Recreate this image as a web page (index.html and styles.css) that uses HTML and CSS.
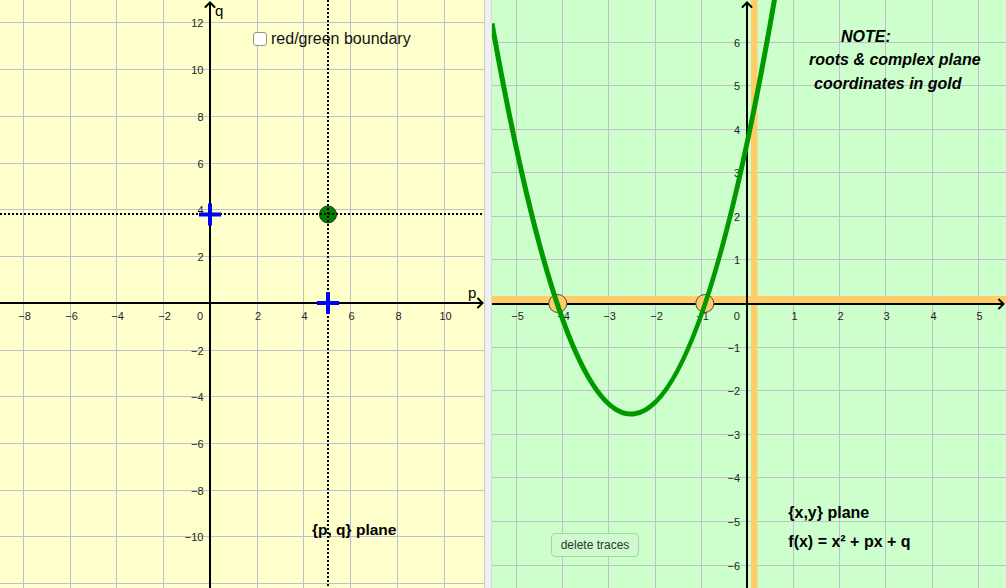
FILE: index.html
```html
<!DOCTYPE html>
<html lang="en">
<head>
<meta charset="utf-8">
<title>Quadratic roots: {p, q} plane and {x, y} plane</title>
<link rel="stylesheet" href="styles.css">
</head>
<body>
<div class="applet">
  <section class="view view-pq">
    <svg class="canvas" width="484" height="588" viewBox="0 0 484 588">
      <g class="grid grid-pq">
        <line x1="23.5" y1="0" x2="23.5" y2="588"/>
        <line x1="70.5" y1="0" x2="70.5" y2="588"/>
        <line x1="116.5" y1="0" x2="116.5" y2="588"/>
        <line x1="163.5" y1="0" x2="163.5" y2="588"/>
        <line x1="257.5" y1="0" x2="257.5" y2="588"/>
        <line x1="303.5" y1="0" x2="303.5" y2="588"/>
        <line x1="350.5" y1="0" x2="350.5" y2="588"/>
        <line x1="397.5" y1="0" x2="397.5" y2="588"/>
        <line x1="444.5" y1="0" x2="444.5" y2="588"/>
        <line x1="0" y1="22.5" x2="484" y2="22.5"/>
        <line x1="0" y1="69.5" x2="484" y2="69.5"/>
        <line x1="0" y1="116.5" x2="484" y2="116.5"/>
        <line x1="0" y1="163.5" x2="484" y2="163.5"/>
        <line x1="0" y1="209.5" x2="484" y2="209.5"/>
        <line x1="0" y1="256.5" x2="484" y2="256.5"/>
        <line x1="0" y1="350.5" x2="484" y2="350.5"/>
        <line x1="0" y1="396.5" x2="484" y2="396.5"/>
        <line x1="0" y1="443.5" x2="484" y2="443.5"/>
        <line x1="0" y1="490.5" x2="484" y2="490.5"/>
        <line x1="0" y1="536.5" x2="484" y2="536.5"/>
        <line x1="0" y1="583.5" x2="484" y2="583.5"/>
      </g>
      <g class="axes">
        <line x1="210" y1="2" x2="210" y2="588"/>
        <line x1="0" y1="303" x2="483" y2="303"/>
        <polyline class="arrow" points="205.5,7 210,2.5 214.5,7"/>
        <polyline class="arrow" points="478,298.5 482.5,303 478,307.5"/>
      </g>
      <text class="axis-name" x="215" y="16">q</text>
      <text class="axis-name" x="468" y="297.5">p</text>
      <g class="tick tick-x">
        <text x="24.5" y="319.5">−8</text>
        <text x="71.5" y="319.5">−6</text>
        <text x="117.5" y="319.5">−4</text>
        <text x="164.5" y="319.5">−2</text>
        <text x="200" y="319.5">0</text>
        <text x="258" y="319.5">2</text>
        <text x="304.5" y="319.5">4</text>
        <text x="351.5" y="319.5">6</text>
        <text x="398.5" y="319.5">8</text>
        <text x="445.5" y="319.5">10</text>
      </g>
      <g class="tick tick-y">
        <text x="203.5" y="27">12</text>
        <text x="203.5" y="74">10</text>
        <text x="203.5" y="121">8</text>
        <text x="203.5" y="168">6</text>
        <text x="203.5" y="214">4</text>
        <text x="203.5" y="261">2</text>
        <text x="203.5" y="355">−2</text>
        <text x="203.5" y="401">−4</text>
        <text x="203.5" y="448">−6</text>
        <text x="203.5" y="495">−8</text>
        <text x="203.5" y="541">−10</text>
      </g>
      <circle class="pq-point" cx="328" cy="214.5" r="8.5"/>
      <g class="dotted">
        <line x1="328" y1="0" x2="328" y2="588"/>
        <line x1="0" y1="214" x2="484" y2="214"/>
      </g>
      <g class="cross">
        <line x1="199" y1="214.5" x2="221" y2="214.5"/>
        <line x1="210" y1="203.5" x2="210" y2="225.5"/>
        <line x1="317" y1="303" x2="339" y2="303"/>
        <line x1="328" y1="292" x2="328" y2="314"/>
      </g>
      <text class="plane-title" x="312" y="535">{p, q} plane</text>
    </svg>
    <label class="toggle"><span class="toggle-box"></span><span class="toggle-text">red/green boundary</span></label>
  </section>

  <div class="splitter"></div>

  <section class="view view-xy">
    <svg class="canvas" width="514" height="588" viewBox="0 0 514 588">
      <g class="grid grid-xy">
        <line x1="24.5" y1="0" x2="24.5" y2="588"/>
        <line x1="70.5" y1="0" x2="70.5" y2="588"/>
        <line x1="116.5" y1="0" x2="116.5" y2="588"/>
        <line x1="163.5" y1="0" x2="163.5" y2="588"/>
        <line x1="209.5" y1="0" x2="209.5" y2="588"/>
        <line x1="301.5" y1="0" x2="301.5" y2="588"/>
        <line x1="347.5" y1="0" x2="347.5" y2="588"/>
        <line x1="393.5" y1="0" x2="393.5" y2="588"/>
        <line x1="440.5" y1="0" x2="440.5" y2="588"/>
        <line x1="486.5" y1="0" x2="486.5" y2="588"/>
        <line x1="0" y1="42.5" x2="514" y2="42.5"/>
        <line x1="0" y1="85.5" x2="514" y2="85.5"/>
        <line x1="0" y1="129.5" x2="514" y2="129.5"/>
        <line x1="0" y1="172.5" x2="514" y2="172.5"/>
        <line x1="0" y1="216.5" x2="514" y2="216.5"/>
        <line x1="0" y1="259.5" x2="514" y2="259.5"/>
        <line x1="0" y1="347.5" x2="514" y2="347.5"/>
        <line x1="0" y1="390.5" x2="514" y2="390.5"/>
        <line x1="0" y1="434.5" x2="514" y2="434.5"/>
        <line x1="0" y1="477.5" x2="514" y2="477.5"/>
        <line x1="0" y1="521.5" x2="514" y2="521.5"/>
        <line x1="0" y1="565.5" x2="514" y2="565.5"/>
      </g>
      <g class="gold">
        <rect x="0" y="296" width="514" height="7.5"/>
        <rect x="259" y="0" width="6.5" height="588"/>
      </g>
      <g class="axes">
        <line x1="255" y1="2" x2="255" y2="588"/>
        <line x1="0" y1="304" x2="512" y2="304"/>
        <polyline class="arrow" points="250.5,7 255,2.5 259.5,7"/>
        <polyline class="arrow" points="507,299.5 511.5,304 507,308.5"/>
      </g>
      <g class="tick tick-x">
        <text x="25.5" y="319.5">−5</text>
        <text x="71.5" y="319.5">−4</text>
        <text x="117.5" y="319.5">−3</text>
        <text x="164.5" y="319.5">−2</text>
        <text x="210.5" y="319.5">−1</text>
        <text x="244.8" y="319.5">0</text>
        <text x="302.5" y="319.5">1</text>
        <text x="348.5" y="319.5">2</text>
        <text x="394.5" y="319.5">3</text>
        <text x="441.5" y="319.5">4</text>
        <text x="487.5" y="319.5">5</text>
      </g>
      <g class="tick tick-y">
        <text x="248" y="46.8">6</text>
        <text x="248" y="89.8">5</text>
        <text x="248" y="133.8">4</text>
        <text x="248" y="176.8">3</text>
        <text x="248" y="220.8">2</text>
        <text x="248" y="263.8">1</text>
        <text x="248" y="351.8">−1</text>
        <text x="248" y="394.8">−2</text>
        <text x="248" y="438.8">−3</text>
        <text x="248" y="481.8">−4</text>
        <text x="248" y="525.8">−5</text>
        <text x="248" y="569.8">−6</text>
      </g>
      <circle class="root" cx="65.8" cy="303.5" r="9"/>
      <circle class="root" cx="212.8" cy="303.5" r="9"/>
      <path class="parabola" d="M0,23.5 Q142.5,823.4 285,-15.05"/>
      <g class="note">
        <text x="349" y="41.5">NOTE:</text>
        <text x="317" y="65">roots &amp; complex plane</text>
        <text x="322" y="88.5">coordinates in gold</text>
      </g>
      <text class="plane-title" x="296.3" y="517.5">{x,y} plane</text>
      <text class="plane-title" x="296.3" y="546.5">f(x) = x² + px + q</text>
    </svg>
    <button class="btn" type="button">delete traces</button>
  </section>
</div>
</body>
</html>
```

FILE: styles.css
```css
html, body {
  margin: 0;
  padding: 0;
  width: 1006px;
  height: 588px;
  overflow: hidden;
  background: #ffffff;
  font-family: "Liberation Sans", Arial, sans-serif;
}

.applet {
  display: flex;
  width: 1006px;
  height: 588px;
}

.view {
  position: relative;
  height: 588px;
  overflow: hidden;
}

.view-pq {
  width: 484px;
  background: #ffffcc;
}

.view-xy {
  flex: 1;
  background: #ccffcc;
}

.splitter {
  width: 8px;
  box-sizing: border-box;
  background: #f0f0f0;
  border-left: 1px solid #c8c8c8;
  border-right: 1px solid #d8d8d8;
}

.canvas {
  display: block;
}

.grid line {
  stroke-width: 1;
}

.grid-pq line {
  stroke: #bebed2;
}

.grid-xy line {
  stroke: #c0c0c8;
}

.gold rect {
  fill: #ffcc66;
}

.axes line {
  stroke: #000000;
  stroke-width: 2;
}

.axes .arrow {
  fill: none;
  stroke: #000000;
  stroke-width: 2;
  stroke-linecap: round;
  stroke-linejoin: miter;
}

.axis-name {
  font-family: "Liberation Sans", Arial, sans-serif;
  font-size: 15px;
  fill: #000000;
}

.tick text {
  font-family: "Liberation Sans", Arial, sans-serif;
  font-size: 11px;
  fill: #1e1e1e;
}

.tick-x text {
  text-anchor: middle;
}

.tick-y text {
  text-anchor: end;
}

.pq-point {
  fill: #008000;
  stroke: #1a3a1a;
  stroke-width: 1;
}

.dotted line {
  stroke: #000000;
  stroke-width: 2;
  stroke-dasharray: 2 2;
}

.cross line {
  stroke: #0000ff;
  stroke-width: 4;
}

.root {
  fill: #ffcc66;
  stroke: #4a4a4a;
  stroke-width: 1;
}

.parabola {
  fill: none;
  stroke: #009900;
  stroke-width: 5;
}

.note text {
  font-family: "Liberation Sans", Arial, sans-serif;
  font-size: 16px;
  font-weight: bold;
  font-style: italic;
  fill: #000000;
}

.plane-title {
  font-family: "Liberation Sans", Arial, sans-serif;
  font-size: 16px;
  font-weight: bold;
  fill: #000000;
}

.view-pq .plane-title {
  font-size: 15.5px;
}

.toggle {
  position: absolute;
  left: 253px;
  top: 31px;
  display: flex;
  align-items: flex-start;
  gap: 4px;
  font-size: 16px;
  line-height: 16px;
  color: #111111;
}

.toggle-box {
  width: 12px;
  height: 12px;
  margin-top: 1px;
  border: 1px solid #8c9888;
  border-radius: 3px;
  background: #ffffff;
}

.btn {
  position: absolute;
  left: 59px;
  top: 533px;
  width: 88px;
  height: 24px;
  padding: 0;
  box-sizing: border-box;
  border: 1px solid #a6d6a6;
  border-radius: 4px;
  background: #ceface;
  font-family: "Liberation Sans", Arial, sans-serif;
  font-size: 12px;
  color: #333333;
  text-align: center;
  line-height: 22px;
}
```
